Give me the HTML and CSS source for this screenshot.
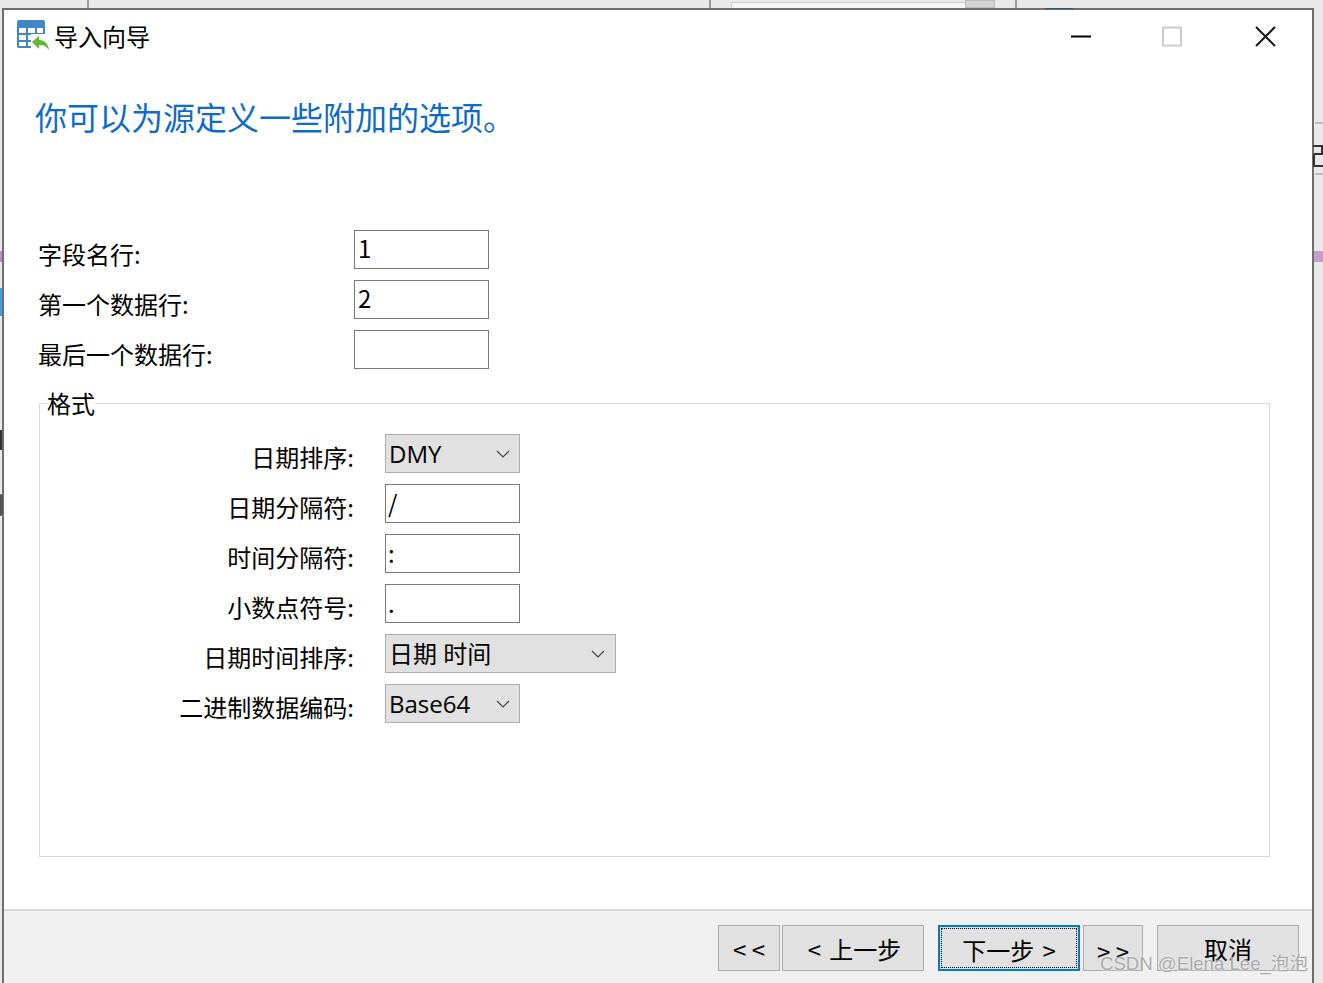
FILE: index.html
```
<!DOCTYPE html>
<html lang="zh-CN">
<head>
<meta charset="utf-8">
<title>导入向导</title>
<link rel="stylesheet" href="styles.css">
</head>
<body>
<div class="bg bg-top1"></div>
<div class="bg bg-top2"></div>
<div class="bg bg-top3"></div>
<div class="bg bg-thumb"></div>
<div class="bg bg-top4"></div>
<div class="bg bg-teal"></div>
<div class="bg bg-rline1"></div>
<div class="bg bg-rline2"></div>
<svg class="bg bg-rglyph" width="10" height="22" viewBox="0 0 10 22"><path d="M0 1h9v8M1 9h9M1 9v12h9" fill="none" stroke="#333" stroke-width="2"/></svg>
<div class="bg bg-rpink"></div>
<div class="bg bg-lpink"></div>
<div class="bg bg-lblue"></div>
<div class="bg bg-lglyph"></div>
<div class="bg bg-lcircle"></div>

<main class="window">
  <header class="titlebar">
    <svg class="app-icon" width="32" height="32" viewBox="0 0 32 32">
      <rect x="0" y="0" width="28" height="28" rx="2" fill="#3f87c5"/>
      <g fill="#fff">
        <rect x="2" y="8" width="7" height="5"/>
        <rect x="11" y="8" width="7" height="5"/>
        <rect x="20" y="8" width="6" height="5"/>
        <rect x="2" y="15" width="7" height="5"/>
        <rect x="11" y="15" width="7" height="5"/>
        <rect x="2" y="22" width="7" height="4"/>
        <rect x="11" y="22" width="7" height="4"/>
      </g>
      <rect x="14" y="14" width="18" height="18" fill="#fff"/>
      <path d="M15 22l7-6v4c5 0 9 3 10 10-3-4-5-5-10-5v4z" fill="#5cb82e"/>
    </svg>
    <span class="title">导入向导</span>
    <div class="controls">
      <svg class="ctl" width="22" height="22" viewBox="0 0 22 22"><path d="M1 10.5h20" stroke="#000" stroke-width="2"/></svg>
      <svg class="ctl" width="22" height="22" viewBox="0 0 22 22"><rect x="2" y="1.5" width="18" height="18" fill="none" stroke="#ccc" stroke-width="2"/></svg>
      <svg class="ctl close" width="22" height="22" viewBox="0 0 22 22"><path d="M1 1l19 19M20 1L1 20" stroke="#1a1a1a" stroke-width="2" fill="none"/></svg>
    </div>
  </header>

  <h1 class="heading">你可以为源定义一些附加的选项。</h1>

  <section class="fields">
    <label class="lbl">字段名行:</label><div class="input">1</div>
    <label class="lbl">第一个数据行:</label><div class="input">2</div>
    <label class="lbl">最后一个数据行:</label><div class="input"></div>
  </section>

  <fieldset class="group">
    <legend class="legend">格式</legend>
    <div class="format">
      <label class="lbl right">日期排序:</label>
      <div class="select"><span>DMY</span><svg class="chev" width="14" height="8" viewBox="0 0 14 8"><path d="M1 1l6 6 6-6" fill="none" stroke="#444" stroke-width="1.2"/></svg></div>
      <label class="lbl right">日期分隔符:</label><div class="input wide">/</div>
      <label class="lbl right">时间分隔符:</label><div class="input wide">:</div>
      <label class="lbl right">小数点符号:</label><div class="input wide">.</div>
      <label class="lbl right">日期时间排序:</label>
      <div class="select long"><span>日期 时间</span><svg class="chev" width="14" height="8" viewBox="0 0 14 8"><path d="M1 1l6 6 6-6" fill="none" stroke="#444" stroke-width="1.2"/></svg></div>
      <label class="lbl right">二进制数据编码:</label>
      <div class="select"><span>Base64</span><svg class="chev" width="14" height="8" viewBox="0 0 14 8"><path d="M1 1l6 6 6-6" fill="none" stroke="#444" stroke-width="1.2"/></svg></div>
    </div>
  </fieldset>

  <footer class="footer">
    <div class="btn first">&lt; &lt;</div>
    <div class="btn prev">&lt; 上一步</div>
    <div class="btn next"><span class="focus">下一步 &gt;</span></div>
    <div class="btn last">&gt; &gt;</div>
    <div class="btn cancel">取消</div>
  </footer>
</main>
<div class="watermark">CSDN @Elena Lee_泡泡</div>
</body>
</html>
```
FILE: styles.css
```
* { box-sizing: border-box; }
html, body { margin: 0; height: 983px; overflow: hidden; }
body {
  width: 1323px;
  background: #e9e9e9;
  font-family: "Noto Sans CJK SC", "Noto Sans", sans-serif;
  font-size: 24px;
  color: #000;
  position: relative;
  padding: 8px 0 0 2px;
}
.bg { position: absolute; }
.bg-top1 { left: 87px; top: 0; width: 2px; height: 8px; background: #999; }
.bg-top2 { left: 709px; top: 0; width: 2px; height: 8px; background: #999; }
.bg-top3 { left: 731px; top: 2px; width: 264px; height: 6px; background: #f6f6f6; border: 1px solid #ccc; border-bottom: 0; }
.bg-thumb { left: 965px; top: 0; width: 30px; height: 8px; background: #d4d4d4; border: 1px solid #bbb; }
.bg-top4 { left: 1015px; top: 0; width: 2px; height: 8px; background: #999; }
.bg-teal { left: 1045px; top: 8px; width: 28px; height: 1px; background: #1d5a78; }
.bg-rline1 { left: 1315px; top: 122px; width: 8px; height: 2px; background: #bdbdbd; }
.bg-rline2 { left: 1315px; top: 173px; width: 8px; height: 2px; background: #bdbdbd; }
.bg-rglyph { left: 1313px; top: 145px; }
.bg-rpink { left: 1314px; top: 251px; width: 9px; height: 11px; background: #c59fca; }
.bg-lpink { left: 0; top: 251px; width: 2px; height: 11px; background: #b98fbc; }
.bg-lblue { left: 0; top: 288px; width: 2px; height: 28px; background: #4a9bd8; }
.bg-lglyph { left: 0; top: 430px; width: 2px; height: 20px; background: #333; }
.bg-lcircle { left: 0; top: 494px; width: 3px; height: 22px; background: #555; border-radius: 0 3px 3px 0; }

.window {
  width: 1312px;
  height: 975px;
  background: #fff;
  border: 2px solid #6e6e6e;
  border-bottom: 0;
  display: flex;
  flex-direction: column;
}

.titlebar {
  display: flex;
  align-items: center;
  height: 50px;
  padding-left: 13px;
  flex: none;
}
.app-icon { flex: none; margin-top: 2px; }
.title { margin-left: 5px; line-height: 1; position: relative; top: 1px; }
.controls {
  margin-left: auto;
  display: flex;
  gap: 69px;
  padding-right: 35px;
  margin-top: 4px;
}
.ctl { display: block; }
.close { margin-left: 3px; }

.heading {
  margin: 34px 0 0 31px;
  font-size: 32px;
  font-weight: 400;
  line-height: 44px;
  color: #0f6bc9;
  white-space: nowrap;
  flex: none;
}

.fields {
  margin: 92px 0 0 34px;
  display: grid;
  grid-template-columns: 316px 135px;
  grid-auto-rows: 39px;
  row-gap: 11px;
  flex: none;
}

.lbl {
  line-height: 47px;
  height: 39px;
  white-space: nowrap;
}
.group .lbl { line-height: 45px; }
.lbl.right { text-align: right; }

.input {
  width: 135px;
  height: 39px;
  border: 1px solid #7a7a7a;
  background: #fff;
  padding-left: 3px;
  line-height: 33px;
}
.group .input { line-height: 36px; padding-left: 2px; }

.group {
  flex: none;
  margin: 19px 0 0 35px;
  padding: 0;
  width: 1231px;
  height: 469px;
  border: 1px solid #d9d9d9;
  min-width: 0;
}
.legend {
  margin-left: 7px;
  padding: 0;
  line-height: 30px;
  height: 30px;
  background: #fff;
}

.format {
  display: grid;
  grid-template-columns: 314px auto;
  justify-content: start;
  column-gap: 31px;
  grid-auto-rows: 39px;
  row-gap: 11px;
  padding-top: 16px;
}
.format > :nth-child(even) { justify-self: start; }

.select {
  width: 135px;
  height: 39px;
  background: #e1e1e1;
  border: 1px solid #adadad;
  padding-left: 3px;
  font-family: "Open Sans", "Noto Sans CJK SC", sans-serif;
  display: flex;
  align-items: center;
  justify-content: space-between;
  padding-right: 9px;
}
.select span { line-height: 37px; height: 37px; }
.select.long { width: 231px; padding-right: 10px; }
.chev { flex: none; }

.footer {
  flex: 1;
  margin-top: 52px;
  border-top: 2px solid #d9d9d9;
  background: #f0f0f0;
  display: flex;
  align-items: flex-start;
  padding: 14px 0 0 714px;
}

.btn {
  height: 46px;
  background: #e1e1e1;
  border: 1px solid #adadad;
  text-align: center;
  line-height: 46px;
  white-space: nowrap;
  flex: none;
}
.first { width: 62px; }
.prev { width: 142px; margin-left: 2px; word-spacing: 3px; padding-left: 3px; }
.next {
  width: 142px;
  margin-left: 14px;
  border: 2px solid #0078d7;
  padding: 1px;
  line-height: 40px;
}
.focus { display: block; height: 40px; border: 1px dotted #000; line-height: 42px; word-spacing: 3px; }
.last { width: 60px; margin-left: 3px; line-height: 50px; }
.cancel { width: 142px; margin-left: 14px; }

.watermark {
  position: absolute;
  right: 15px;
  top: 951px;
  font-size: 18.6px;
  line-height: 26px;
  color: #a9a9a9;
  font-family: "Liberation Sans", "Noto Sans CJK SC", sans-serif;
  text-shadow: 0 0 2px #fff;
  white-space: nowrap;
}
```
